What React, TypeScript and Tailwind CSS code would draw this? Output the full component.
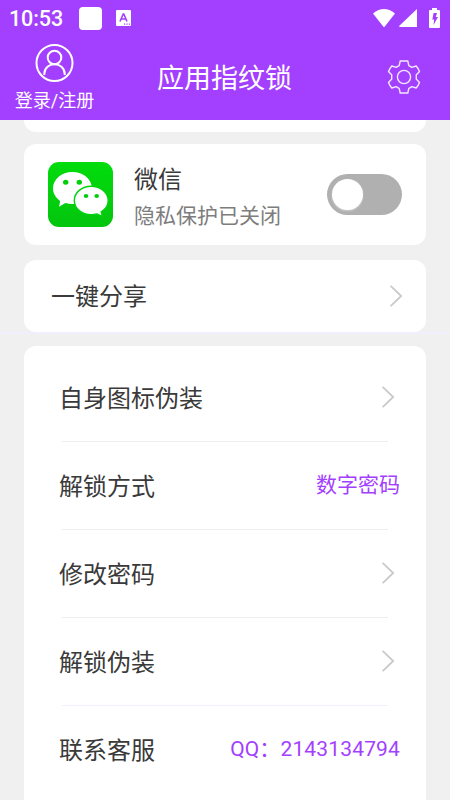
import React from 'react';

const rows: { label: string; value?: string }[] = [
  { label: '自身图标伪装' },
  { label: '解锁方式', value: '数字密码' },
  { label: '修改密码' },
  { label: '解锁伪装' },
  { label: '联系客服', value: 'QQ：2143134794' },
];

function Chevron() {
  return (
    <svg className="block h-[22px] w-[13px] shrink-0" viewBox="0 0 13 22" fill="none" stroke="#c9c9c9" strokeWidth="1.8">
      <path d="M.6 .8 11.2 11 .6 21.2" />
    </svg>
  );
}

function StatusBar() {
  return (
    <div className="flex h-9 items-center pr-[10px] pl-[9px]">
      <span className="w-[70px] pt-[2px] text-[21.5px] leading-9 font-medium tracking-[-0.1px]">10:53</span>
      <span className="h-[23px] w-[23px] rounded-[4px] bg-white" />
      <svg className="ml-[14px] h-4 w-[15px]" viewBox="0 0 15 16">
        <rect width="15" height="16" rx="1" fill="white" />
        <path d="M4 11.500 7.200 4h.6L11 11.500M5.200 9h4.600" fill="none" stroke="#a340ff" strokeWidth="1.600" />
        <path d="M8 14.200h1.200M10.400 14.200h1.200M12.800 14.200H14" stroke="#a340ff" strokeWidth="1.200" />
      </svg>
      <svg className="ml-auto h-[18px] w-[22px]" viewBox="0 0 22 18" fill="white">
        <path d="M0 4.400Q11-4.200 22 4.400L11.600 17.700q-.6.6-1.200 0Z" />
      </svg>
      <svg className="ml-1 h-[18px] w-[18px]" viewBox="0 0 18 18" fill="white">
        <path d="M18 0v18H.8q-1.100-.4-.4-1.200Z" />
      </svg>
      <svg className="-mt-px ml-3 h-5 w-[11px]" viewBox="0 0 11 20">
        <path d="M3 0h5v2h2q1 0 1 1v16q0 1-1 1H1q-1 0-1-1V3q0-1 1-1h2Z" fill="white" />
        <path d="M4.600 5H8L6.800 9H9L4.500 17l.6-5.500H3.300Z" fill="#a340ff" />
      </svg>
    </div>
  );
}

function WeChatLogo() {
  return (
    <svg className="h-[65px] w-[65px] shrink-0" viewBox="0 0 65 65">
      <defs>
        <linearGradient id="wechatGreen" x2="0" y2="1">
          <stop stopColor="#02dc0c" />
          <stop offset="1" stopColor="#03c50e" />
        </linearGradient>
      </defs>
      <rect width="65" height="65" rx="11" fill="url(#wechatGreen)" />
      <path d="M24.500 10C13.500 10 5 17.300 5 26.300c0 5.100 2.700 9.600 7.200 12.600L11 44.700l6.400-3.600c2.300.7 4.600 1 7.100 1 10.900 0 19.400-7 19.400-15.900S35.400 10 24.500 10Z" fill="white" />
      <path d="M43.200 24.300c-9.300 0-16.900 6.200-16.900 14.200s7.600 14.200 16.900 14.200c2 0 4-.3 5.800-.8l5.500 2.800-1.300-4.900c4.300-2.600 7-6.700 7-11.300 0-8-7.700-14.200-17-14.200Z" fill="white" stroke="#02d20d" strokeWidth="1.400" />
      <g fill="#02ce0c">
        <ellipse cx="17.700" cy="20.300" rx="2.700" ry="2.500" />
        <ellipse cx="31.300" cy="20.300" rx="2.700" ry="2.500" />
        <ellipse cx="38" cy="34" rx="2.300" ry="2.100" />
        <ellipse cx="48.700" cy="34" rx="2.300" ry="2.100" />
      </g>
    </svg>
  );
}

export default function App() {
  return (
    <div className="flex h-[800px] w-[450px] flex-col overflow-hidden bg-[#f0f0f0] font-['Roboto','Noto_Sans_CJK_SC',sans-serif] text-[#3a3a3a]">
      <header className="h-[120px] shrink-0 bg-[#a340ff] text-white">
        <StatusBar />
        <div className="flex h-[84px] items-start">
          <div className="flex w-[108px] flex-col items-center pt-[7px]">
            <svg className="h-[39px] w-[39px]" viewBox="0 0 39 39" fill="none" stroke="white" strokeWidth="2">
              <circle cx="19.500" cy="20" r="18" />
              <circle cx="19.500" cy="14.500" r="6.800" />
              <path d="M9.300 32v-1c0-13 20.400-13 20.400 0v1" />
            </svg>
            <span className="mt-[6px] pl-px text-[18px] leading-[26px]">登录/注册</span>
          </div>
          <h1 className="flex-1 pt-[23px] text-center text-[27px] leading-[40px] font-normal">应用指纹锁</h1>
          <div className="flex w-[109px] justify-center pt-[24px] pl-[17px]">
            <svg className="h-[34px] w-[34px]" viewBox="0 0 34 34" fill="none" stroke="#f4e8ff" strokeWidth="1.400" strokeLinejoin="round">
              <path d="M13.200 1h7.600l1 4.700q1.500.6 2.900 1.700l4.500-1.400q2 2.300 3.300 5.600l-3.300 3.500q.3 1.900 0 3.800l3.300 3.500q-1.300 3.300-3.300 5.600l-4.500-1.400q-1.400 1.100-2.900 1.700l-1 4.700h-7.600l-1-4.700q-1.500-.6-2.900-1.700L4.800 28q-2-2.300-3.300-5.600l3.300-3.500q-.3-1.900 0-3.800l-3.300-3.500Q2.800 8.300 4.800 6l4.500 1.400q1.400-1.100 2.900-1.700Z" />
              <circle cx="17" cy="17" r="6.600" />
            </svg>
          </div>
        </div>
      </header>

      <main className="flex flex-1 flex-col">
        <div className="mx-6 h-3 shrink-0 rounded-b-xl bg-white" />

        <section className="mx-6 mt-3 flex h-[101px] shrink-0 items-center rounded-xl bg-white px-6">
          <WeChatLogo />
          <div className="ml-[21px] flex-1 pt-[5px]">
            <div className="text-[24px] leading-[36px]">微信</div>
            <div className="mt-[2px] text-[21px] leading-[32px] text-[#7d7d7d]">隐私保护已关闭</div>
          </div>
          <button type="button" aria-label="微信" className="flex h-[41px] w-[75px] items-center rounded-full bg-[#b0b0b0] pl-[5px]">
            <span className="h-[31px] w-[31px] rounded-full bg-white shadow-[0_1px_2px_rgba(255,255,255,0.4)]" />
          </button>
        </section>

        <section className="mx-6 mt-[15px] flex h-[72px] shrink-0 items-center justify-between rounded-xl bg-white pr-[23px] pl-[27px]">
          <span className="pt-[2px] text-[24px] leading-9">一键分享</span>
          <Chevron />
        </section>
        <div className="h-[2px] shrink-0 bg-[#f0eeff]" />

        <section className="mx-6 mt-3 h-[470px] shrink-0 rounded-t-xl bg-white pt-[7px]">
          {rows.map(({ label, value }, i) => (
            <div key={label}>
              <div className="flex h-[88px] items-center justify-between pr-[26px] pl-[35px]">
                <span className="pt-[4px] text-[24px] leading-9">{label}</span>
                {value ? (
                  <span className={`text-[21px] leading-8 text-[#a340ff] ${i === 4 ? 'tracking-[0.15px]' : ''}`}>{value}</span>
                ) : (
                  <span className="pr-[5px]"><Chevron /></span>
                )}
              </div>
              {i < rows.length - 1 && <div className={`mx-auto -mb-px h-px w-[326px] ${i === 3 ? 'bg-[#f0eeff]' : 'bg-[#eeeeee]'}`} />}
            </div>
          ))}
        </section>
      </main>
    </div>
  );
}
